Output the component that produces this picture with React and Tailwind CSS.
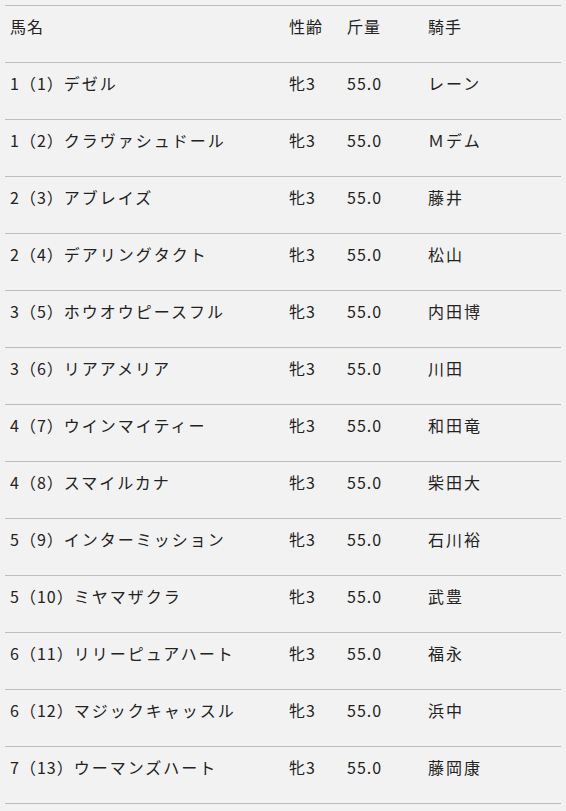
const rows = [
  ["1（1）", "デゼル", "レーン"],
  ["1（2）", "クラヴァシュドール", "Ｍデム"],
  ["2（3）", "アブレイズ", "藤井"],
  ["2（4）", "デアリングタクト", "松山"],
  ["3（5）", "ホウオウピースフル", "内田博"],
  ["3（6）", "リアアメリア", "川田"],
  ["4（7）", "ウインマイティー", "和田竜"],
  ["4（8）", "スマイルカナ", "柴田大"],
  ["5（9）", "インターミッション", "石川裕"],
  ["5（10）", "ミヤマザクラ", "武豊"],
  ["6（11）", "リリーピュアハート", "福永"],
  ["6（12）", "マジックキャッスル", "浜中"],
  ["7（13）", "ウーマンズハート", "藤岡康"],
];

const cell = "pl-[5px] pt-2 pb-6 text-base leading-6 tracking-[1px] whitespace-nowrap";

export default function App() {
  return (
    <div
      className="min-h-[811px] bg-[#f2f2f2] px-[5px] pt-[5px] text-[#222]"
      style={{ fontFamily: '"Noto Sans CJK JP", "Noto Sans", sans-serif' }}
    >
      <div className="border-b border-[#bdbdbd]">
        <div className="grid grid-cols-[279px_58px_81px_1fr] border-t border-[#bdbdbd]">
          <div className={cell}>馬名</div>
          <div className={cell}>性齢</div>
          <div className={cell}>斤量</div>
          <div className={cell}>騎手</div>
        </div>
        {rows.map(([num, name, jockey]) => (
          <div key={name} className="grid grid-cols-[279px_58px_81px_1fr] border-t border-[#bdbdbd]">
            <div className={cell}>
              {num}
              <span className="tracking-[2px]">{name}</span>
            </div>
            <div className={cell}>牝3</div>
            <div className={cell}>55.0</div>
            <div className={cell + " tracking-[2px]"}>{jockey}</div>
          </div>
        ))}
      </div>
    </div>
  );
}
